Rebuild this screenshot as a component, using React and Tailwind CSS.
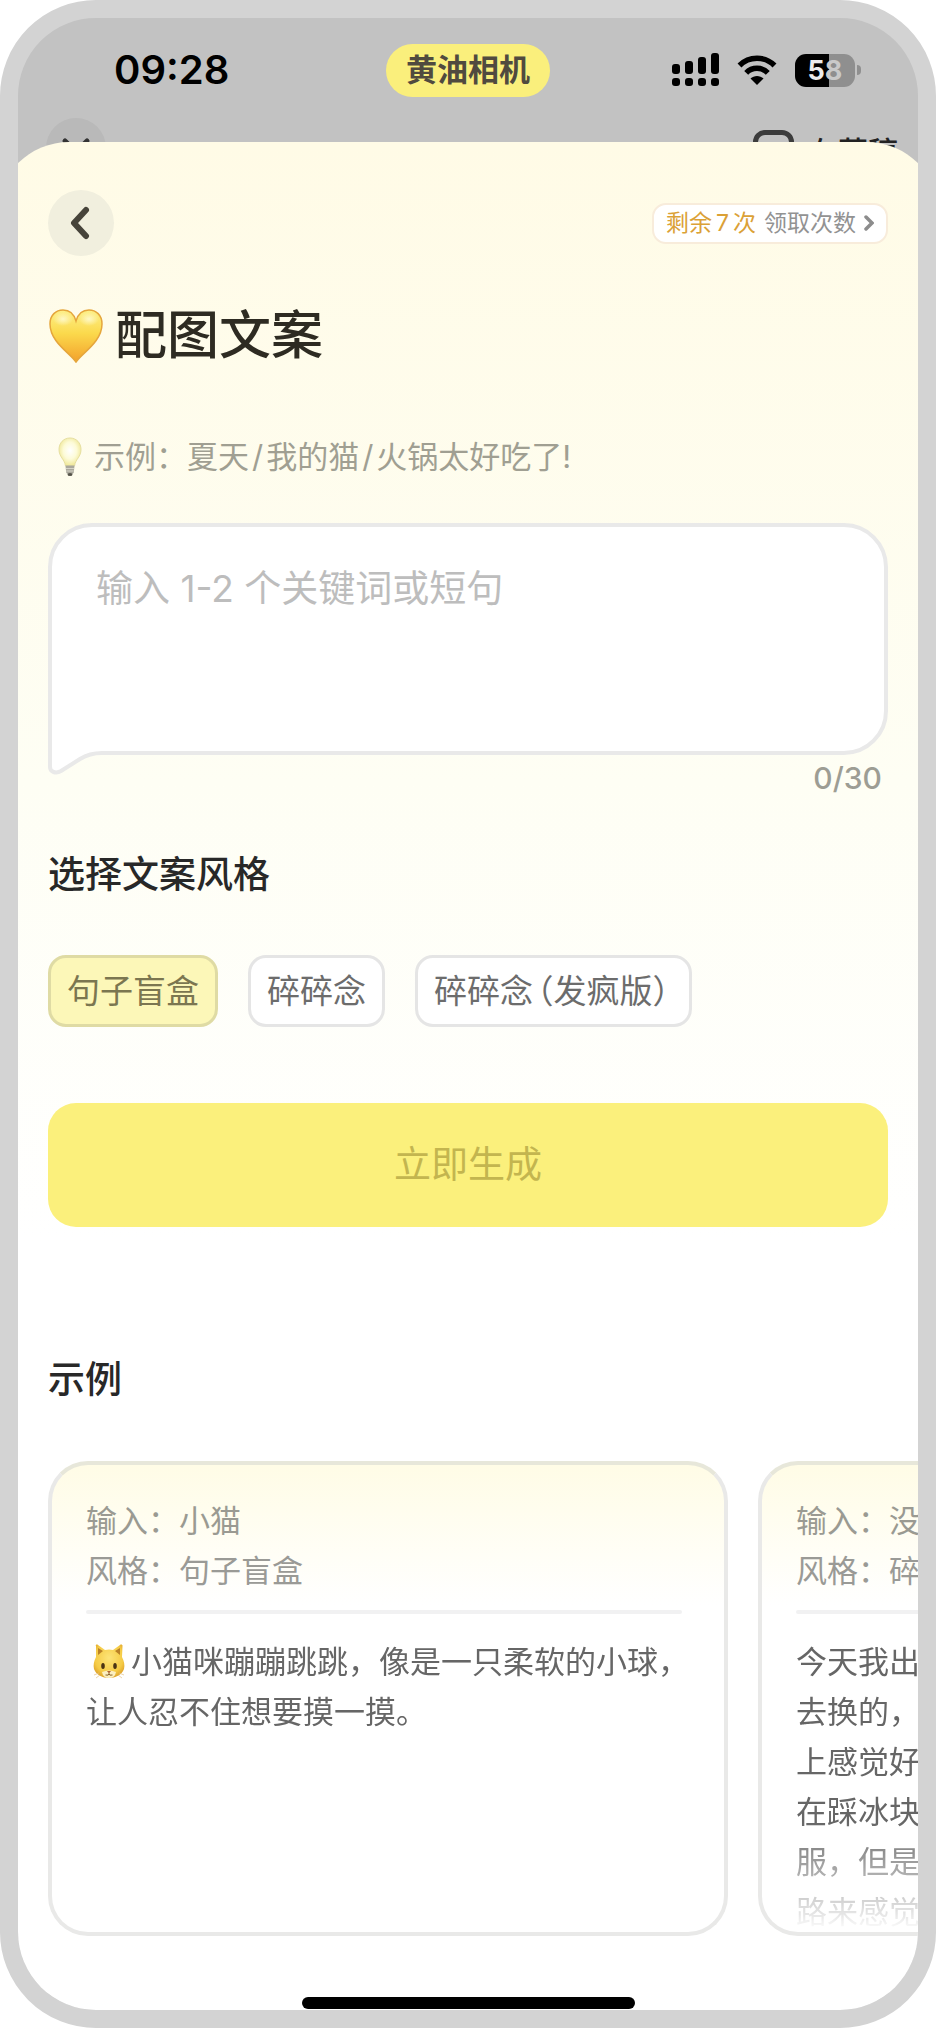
import React, { useState } from 'react';

const STYLES = [
    { id: 'box', label: '句子盲盒' },
    { id: 'murmur', label: '碎碎念' },
    { id: 'crazy', label: '碎碎念', note: '（发疯版）' },
];

const EXAMPLES = [
    {
        input: '小猫',
        style: '句子盲盒',
        cat: true,
        lines: ['小猫咪蹦蹦跳跳，像是一只柔软的小球，', '让人忍不住想要摸一摸。'],
    },
    {
        input: '没',
        style: '碎',
        lines: ['今天我出', '去换的，', '上感觉好', '在踩冰块', '服，但是', '路来感觉'],
    },
];

const MAX_LENGTH = 30;

function Heart() {
    return (
        <svg width="56" height="56" viewBox="0 0 56 56" aria-hidden="true">
            <defs>
                <linearGradient id="heartFill" x1="0" y1="0" x2="0" y2="1">
                    <stop offset="0" stopColor="#fdf08a" />
                    <stop offset="0.45" stopColor="#fbd94c" />
                    <stop offset="1" stopColor="#f3a12c" />
                </linearGradient>
                <radialGradient id="heartShine" cx="0.5" cy="0.5" r="0.5">
                    <stop offset="0" stopColor="#fffad0" stopOpacity="0.9" />
                    <stop offset="1" stopColor="#fffad0" stopOpacity="0" />
                </radialGradient>
            </defs>
            <path
                d="M28 54C22 45 2 34 2 16C2 7 8 2 15 2C21 2 26 6 28 13C30 6 35 2 41 2C48 2 54 7 54 16C54 34 34 45 28 54Z"
                fill="url(#heartFill)"
                stroke="#e5a63c"
                strokeWidth="1.5"
            />
            <ellipse cx="15" cy="11" rx="10" ry="7" fill="url(#heartShine)" />
            <ellipse cx="41" cy="11" rx="10" ry="7" fill="url(#heartShine)" />
        </svg>
    );
}

function Bulb() {
    return (
        <svg width="24" height="40" viewBox="0 0 24 40" aria-hidden="true">
            <defs>
                <radialGradient id="bulbFill" cx="0.5" cy="0.45" r="0.55">
                    <stop offset="0" stopColor="#ffffff" />
                    <stop offset="0.55" stopColor="#fdfbd8" />
                    <stop offset="1" stopColor="#efe795" />
                </radialGradient>
            </defs>
            <path
                d="M12 1C5.500 1 1 6 1 12.500C1 20 6.500 22 7.500 29H16.500C17.500 22 23 20 23 12.500C23 6 18.500 1 12 1Z"
                fill="url(#bulbFill)"
                stroke="#e6dfa0"
            />
            <path d="M7.500 28.500H16.500L15.800 35.500C15 38 9 38 8.200 35.500Z" fill="#aaa89c" />
            <path d="M8 31.500H16M8.300 34H15.700" stroke="#d6d4c8" />
            <ellipse cx="12" cy="37.500" rx="2.500" ry="1.500" fill="#55534a" />
        </svg>
    );
}

function CatFace() {
    return (
        <svg width="32" height="36" viewBox="0 0 32 36" aria-hidden="true">
            <defs>
                <radialGradient id="catFill" cx="0.5" cy="0.4" r="0.65">
                    <stop offset="0" stopColor="#fde478" />
                    <stop offset="0.7" stopColor="#f5cb45" />
                    <stop offset="1" stopColor="#d99a25" />
                </radialGradient>
            </defs>
            <path
                d="M3 2C2 1 4 0 5 1L12 6Q16 5 20 6L27 1C28 0 30 1 29.500 2L29 13C31 17 32 21 31 25C29 31 22 34 16 34C10 34 3 31 1 25C0 21 1 17 3 13Z"
                fill="url(#catFill)"
            />
            <path d="M5 4L10 7L5 11ZM27 4L22 7L27 11Z" fill="#b98127" />
            <path d="M9 28Q16 25 23 28Q22 34 16 34Q10 34 9 28Z" fill="#fbefc0" />
            <ellipse cx="10" cy="22" rx="1.800" ry="3" fill="#4a3313" />
            <ellipse cx="22" cy="22" rx="1.800" ry="3" fill="#4a3313" />
            <path d="M14 27H18L16 29.500Z" fill="#b0622e" />
            <path d="M12.500 31Q16 32 16 29.500Q16 32 19.500 31" fill="none" stroke="#8a6225" />
            <path d="M1 31L6 29M31 31L26 29M3 34L7 31M29 34L25 31" stroke="#e2c184" strokeWidth="0.700" />
        </svg>
    );
}

function SignalIcon() {
    return (
        <svg width="47" height="34" viewBox="0 0 47 34" aria-hidden="true">
            <rect x="0" y="11" width="8" height="10" rx="3" />
            <rect x="13" y="8" width="8" height="13" rx="3" />
            <rect x="26" y="4" width="8" height="17" rx="3" />
            <rect x="39" y="0" width="8" height="21" rx="3" />
            <rect x="0" y="25" width="8" height="8" rx="3" />
            <rect x="13" y="25" width="8" height="8" rx="3" />
            <rect x="26" y="25" width="8" height="8" rx="3" />
            <rect x="39" y="25" width="8" height="8" rx="3" />
        </svg>
    );
}

function WifiIcon() {
    return (
        <svg width="40" height="30" viewBox="0 0 40 30" aria-hidden="true">
            <path d="M2.500 10.500C12 0.800 28 0.800 37.500 10.500" fill="none" stroke="#000" strokeWidth="5.500" />
            <path d="M9.200 17.800C15 11.800 25 11.800 30.800 17.800" fill="none" stroke="#000" strokeWidth="5.500" />
            <path d="M20 30L13.500 23.500C17 20 23 20 26.500 23.500Z" />
        </svg>
    );
}

function StatusBar() {
    return (
        <div className="grid h-[100px] grid-cols-[1fr_auto_1fr] items-center pt-1">
            <span className="pl-24 text-[40px] leading-[48px] font-semibold text-black">09:28</span>
            <span className="flex h-[53px] items-center rounded-full bg-[#faef7c] px-5 text-[31px] leading-[44px] font-bold text-[#504a3f]">
                黄油相机
            </span>
            <div className="flex items-center justify-end gap-[18px] pr-[57px]">
                <SignalIcon />
                <WifiIcon />
                <div className="flex items-center gap-[2px]">
                    <span className="flex h-[33px] w-[60px] items-center justify-center rounded-[11px] bg-linear-to-r from-black from-57% to-[#8f8f8f] to-57% text-[27px] leading-[33px] font-bold text-[#c9c9c9]">
                        <span className="text-[#ececec]">5</span>8
                    </span>
                    <span className="h-[10px] w-1 rounded-r-full bg-[#8f8f8f]" />
                </div>
            </div>
        </div>
    );
}

// Editor toolbar that stays half hidden behind the sheet
function EditorBar() {
    return (
        <div className="flex h-[60px] items-start justify-between pr-5 pl-7">
            <span className="flex size-[60px] items-center justify-center rounded-full bg-[#b9b9b9]">
                <svg width="32" height="28" viewBox="0 0 32 28" aria-hidden="true">
                    <path d="M5 7L16 18L27 7" fill="none" stroke="#333" strokeWidth="5" strokeLinecap="round" />
                </svg>
            </span>
            <div className="flex items-start gap-[14px] pt-3">
                <span className="size-[41px] rounded-[12px] border-[5px] border-[#3c3c3c]" />
                <span className="pt-[5px] text-[30px] leading-[34px] font-medium text-[#222]">存草稿</span>
            </div>
        </div>
    );
}

function ExampleCard({ item }) {
    return (
        <article className="h-[475px] w-[680px] shrink-0 rounded-[40px] border-4 border-[#e9e9e8] border-t-[#e7e7da] bg-linear-to-b from-[#fffce6] to-white to-[140px] px-[34px] pt-[31px] text-[31px] leading-[50px]">
            <p className="text-[#9a9a92]">输入：{item.input}</p>
            <p className="text-[#9a9a96]">风格：{item.style}</p>
            <hr className="mt-[14px] mr-2 h-1 rounded-full border-0 bg-[#f1f1f2]" />
            <div className="mt-[23px] mask-[linear-gradient(black_185px,transparent_295px)] text-[#666]">
                {item.lines.map((line, i) => (
                    <p key={line} className="flex items-center whitespace-nowrap">
                        {item.cat && i === 0 && (
                            <span className="flex w-[45px] justify-center">
                                <CatFace />
                            </span>
                        )}
                        {line}
                    </p>
                ))}
            </div>
        </article>
    );
}

export default function App() {
    const [text, setText] = useState('');
    const [style, setStyle] = useState('box');

    return (
        <div className="min-h-screen bg-white font-['Inter','Noto_Sans_CJK_SC',sans-serif]" lang="zh-CN">
            <div className="overflow-hidden rounded-[96px] border-[18px] border-[#d3d3d3] bg-[#c2c2c2]">
                <StatusBar />
                <EditorBar />

                {/* Sheet */}
                <main className="relative -mx-[21px] -mt-9 rounded-t-[72px] bg-linear-to-b from-[#fffbe6] via-[#fefef4] via-[640px] to-white to-[1100px] px-[51px] pt-12">
                    <header className="flex h-[66px] items-center justify-between">
                        <button type="button" aria-label="返回" className="flex size-[66px] items-center justify-center rounded-full bg-[#f1efde]">
                            <svg width="22" height="34" viewBox="0 0 22 34" aria-hidden="true">
                                <path d="M16 4L4 17L16 30" fill="none" stroke="#47443a" strokeWidth="6" strokeLinecap="round" strokeLinejoin="round" />
                            </svg>
                        </button>
                        <button type="button" className="flex h-[41px] items-center gap-2 rounded-[14px] border-2 border-[#f8ecdb] bg-white px-3 text-[23px] leading-[36px] text-[#929292]">
                            <span className="text-[#dba136]">
                                剩余<span className="mx-1">7</span>次
                            </span>
                            <span>领取次数</span>
                            <svg width="10" height="18" viewBox="0 0 10 18" aria-hidden="true">
                                <path d="M2 3L8 9L2 15" fill="none" stroke="#8c8c8c" strokeWidth="3.500" strokeLinecap="round" />
                            </svg>
                        </button>
                    </header>

                    <h1 className="mt-[50px] flex h-[60px] items-center gap-[11px] text-[52px] leading-[60px] font-medium text-[#2e2b22]">
                        <Heart />
                        配图文案
                    </h1>

                    <p className="mt-[67px] flex h-12 items-center gap-3 pl-[10px] text-[31px] leading-[48px] text-[#a09f92]">
                        <Bulb />
                        <span>
                            示例：夏天<span className="mx-[3px]">/</span>我的猫<span className="mx-[3px]">/</span>火锅太好吃了!
                        </span>
                    </p>

                    {/* Speech bubble input */}
                    <div className="relative mt-[42px] h-[232px] rounded-[44px] rounded-bl-none border-4 border-[#e9e9e9] bg-white">
                        <textarea
                            aria-label="关键词或短句"
                            maxLength={MAX_LENGTH}
                            value={text}
                            onChange={(e) => setText(e.target.value)}
                            placeholder="输入 1-2 个关键词或短句"
                            className="block h-full w-full resize-none bg-transparent px-11 pt-[37px] text-[37px] leading-[50px] text-[#333] outline-none placeholder:text-[#bdbdbd]"
                        />
                        <svg className="absolute -bottom-6 -left-1" width="58" height="28" viewBox="0 0 58 28" aria-hidden="true">
                            <path d="M2 0V20C2 25 8 27 13 24L32 12C40 7 46 6 54 6H58V0Z" fill="#fff" />
                            <path d="M2 0V20C2 25 8 27 13 24L32 12C40 7 46 6 54 6H58" fill="none" stroke="#e9e9e9" strokeWidth="4" />
                        </svg>
                    </div>
                    <p className="mt-[5px] pr-[6px] text-right text-[30px] leading-[36px] font-medium text-[#9d9d94]">
                        {text.length}/{MAX_LENGTH}
                    </p>

                    <fieldset className="mt-[55px]">
                        <legend className="text-[37px] leading-[48px] font-medium text-[#282828]">选择文案风格</legend>
                        <div className="mt-14 flex gap-[30px]">
                            {STYLES.map((s) => (
                                <label
                                    key={s.id}
                                    className="relative flex h-[72px] items-center rounded-[18px] border-[3px] border-[#e5e5e5] bg-white px-4 text-[33px] leading-[48px] text-[#6c6c6c] has-checked:border-[#dfdba4] has-checked:bg-[#fcf7b8] has-checked:text-[#7b7650]"
                                >
                                    <input
                                        type="radio"
                                        name="style"
                                        value={s.id}
                                        checked={style === s.id}
                                        onChange={() => setStyle(s.id)}
                                        className="sr-only"
                                    />
                                    {s.label}
                                    {s.note && <span className="mx-1 [font-feature-settings:'halt']">{s.note}</span>}
                                </label>
                            ))}
                        </div>
                    </fieldset>

                    <button type="button" className="mt-[76px] h-[124px] w-full rounded-[28px] bg-[#fbf07c] text-[37px] leading-[48px] text-[#c3b54f]">
                        立即生成
                    </button>

                    <h2 className="mt-[129px] text-[37px] leading-[48px] font-medium text-[#282828]">示例</h2>
                    <div className="-mx-[51px] mt-[57px] flex gap-[30px] overflow-x-auto px-[51px] pb-1 [scrollbar-width:none]">
                        {EXAMPLES.map((item) => (
                            <ExampleCard key={item.input} item={item} />
                        ))}
                    </div>

                    {/* Home indicator */}
                    <div className="pt-[57px] pb-px">
                        <div className="mx-auto h-3 w-[37%] min-w-[333px] rounded-full bg-black" />
                    </div>
                </main>
            </div>
        </div>
    );
}
